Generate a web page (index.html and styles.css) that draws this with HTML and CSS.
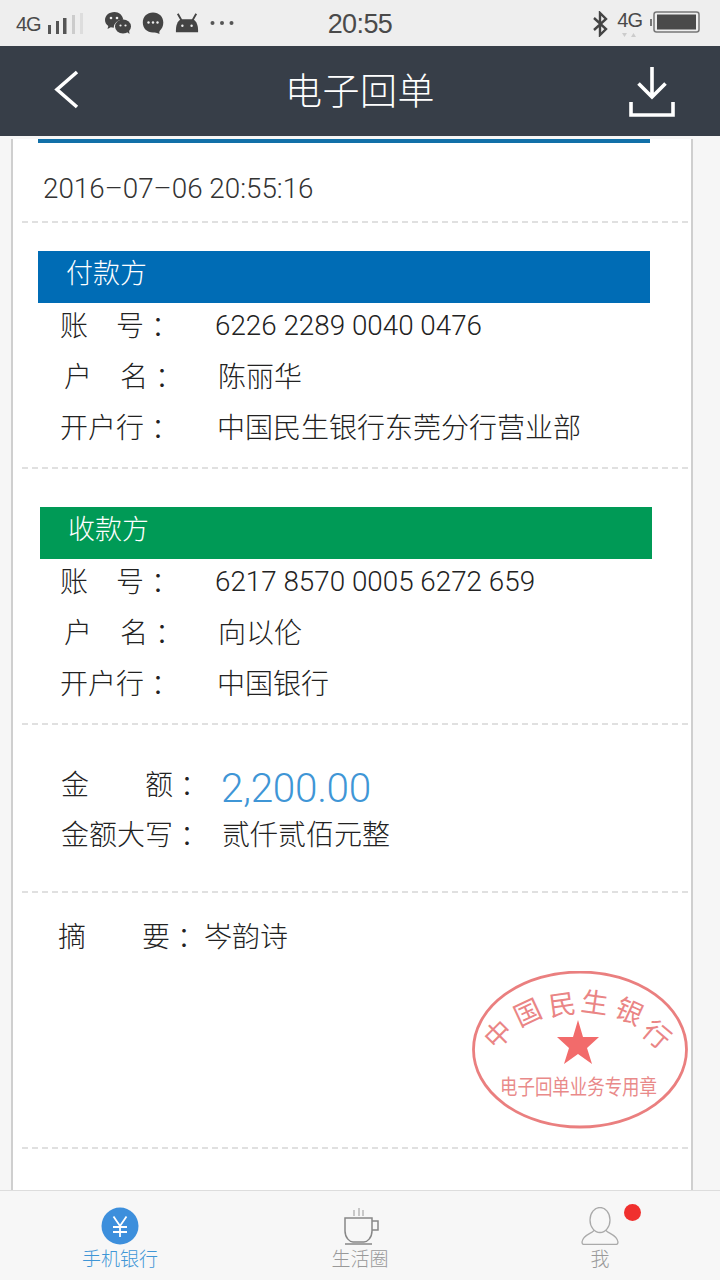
FILE: index.html
```html
<!DOCTYPE html>
<html lang="zh">
<head>
<meta charset="utf-8">
<title>电子回单</title>
<link rel="stylesheet" href="styles.css">
</head>
<body>
<div class="phone">
  <div class="status">
    <div class="status-left">
      <span class="net">4G</span>
      <svg class="signal" width="38" height="24" viewBox="0 0 38 24"><rect x="1" y="13" width="3" height="9" fill="#555"/><rect x="9" y="9" width="3" height="13" fill="#555"/><rect x="16" y="6" width="3.500" height="16" fill="#555"/><rect x="25" y="3" width="3" height="19" fill="#ccc"/><rect x="33" y="1" width="3" height="21" fill="#ddd"/></svg>
      <svg class="wechat" width="28" height="24" viewBox="0 0 28 24"><path d="M10.500 1C5 1 1 4.600 1 9c0 2.500 1.300 4.500 3.300 6l-.8 3 3.300-1.800c1 .3 2 .5 3 .5 0-4.700 4-8 9.500-8C18.500 4 15 1 10.500 1z" fill="#444"/><ellipse cx="19" cy="15.500" rx="8" ry="7" fill="#444"/><path d="M23 21l2.500 2-.5-4z" fill="#444"/><circle cx="7" cy="7" r="1.300" fill="#eee"/><circle cx="13" cy="7" r="1.300" fill="#eee"/><circle cx="16.500" cy="14.500" r="1.100" fill="#eee"/><circle cx="21.500" cy="14.500" r="1.100" fill="#eee"/></svg>
      <svg class="bubble" width="22" height="24" viewBox="0 0 22 24"><path d="M11 1.500C5 1.500.8 5.800.8 11.500S5 21.500 11 21.500c2 0 4 0 6.500 1.500-.3-1.500-.3-2.500.3-3.300 2.200-2 3.500-4.700 3.500-8.200C21.300 5.800 17 1.500 11 1.500z" fill="#444"/><circle cx="6.500" cy="11.500" r="1.200" fill="#eee"/><circle cx="11" cy="11.500" r="1.200" fill="#eee"/><circle cx="15.500" cy="11.500" r="1.200" fill="#eee"/></svg>
      <svg class="droid" width="24" height="24" viewBox="0 0 26 24"><path d="M3 2l4 7M23 2l-4 7" stroke="#444" stroke-width="2"/><path d="M1 20c0-7 3-12 7-12h10c4 0 7 5 7 12v2H1z" fill="#444"/><circle cx="8" cy="15" r="1.300" fill="#eee"/><circle cx="18" cy="15" r="1.300" fill="#eee"/></svg>
      <svg class="dots" width="24" height="6" viewBox="0 0 24 6"><circle cx="2.500" cy="3" r="2" fill="#555"/><circle cx="12" cy="3" r="2" fill="#555"/><circle cx="21.500" cy="3" r="2" fill="#555"/></svg>
    </div>
    <div class="clock">20:55</div>
    <div class="status-right">
      <svg class="bt" width="16" height="26" viewBox="0 0 16 26"><path d="M2 7l12 11-6 6V2l6 6L2 19" fill="none" stroke="#444" stroke-width="2.400"/></svg>
      <span class="net-r">4G<svg class="updown" width="16" height="6" viewBox="0 0 16 6"><path d="M1 1h5L3.500 5zM10 5h5l-2.500-4z" fill="#ccc"/></svg></span>
      <svg class="batt" width="50" height="22" viewBox="0 0 50 22"><rect x="0" y="8" width="2" height="7" fill="#777"/><rect x="4" y="1" width="45" height="20" rx="2.500" fill="none" stroke="#777" stroke-width="1.500"/><rect x="7" y="3.500" width="39" height="15" fill="#4a4a4a"/></svg>
    </div>
  </div>

  <header class="topbar">
    <svg class="back" width="30" height="40" viewBox="0 0 30 40"><path d="M25 3L5 20.500 25 38" fill="none" stroke="#fff" stroke-width="3.600"/></svg>
    <h1 class="title">电子回单</h1>
    <svg class="download" width="48" height="52" viewBox="0 0 48 52"><path d="M24 1v29M10.500 17.500L24 31l13.500-13.500M3 36v13h42V36" fill="none" stroke="#fff" stroke-width="3.600"/></svg>
  </header>

  <main class="viewport">
    <div class="card">
      <div class="rule"></div>
      <div class="date">2016–07–06 20:55:16</div>
      <div class="dash dash-date"></div>

      <div class="band band-blue">付款方</div>
      <div class="row row-first"><span class="label">账　号<span class="colon">：</span></span><span class="num">6226 2289 0040 0476</span></div>
      <div class="row"><span class="label lab-hu">户　名<span class="colon">：</span></span><span class="val">陈丽华</span></div>
      <div class="row"><span class="label">开户行<span class="colon">：</span></span><span class="val">中国民生银行东莞分行营业部</span></div>
      <div class="dash dash-pay"></div>

      <div class="band band-green">收款方</div>
      <div class="row row-first"><span class="label">账　号<span class="colon">：</span></span><span class="num">6217 8570 0005 6272 659</span></div>
      <div class="row"><span class="label lab-hu">户　名<span class="colon">：</span></span><span class="val">向以伦</span></div>
      <div class="row"><span class="label">开户行<span class="colon">：</span></span><span class="val">中国银行</span></div>
      <div class="dash dash-rec"></div>

      <div class="amount-row"><span class="amt-label amt-raised">金　　额<span class="colon">：</span></span><span class="amount">2,200.00</span></div>
      <div class="caps-row"><span class="amt-label">金额大写<span class="colon">：</span></span><span class="caps">贰仟贰佰元整</span></div>
      <div class="dash dash-amt"></div>

      <div class="memo-row"><span class="memo-label">摘　　要<span class="colon">：</span></span><span class="memo">岑韵诗</span></div>
      <div class="dash dash-memo"></div>

      <svg class="stamp" width="220" height="162" viewBox="0 0 220 162">
        <ellipse cx="109" cy="78.500" rx="106.500" ry="77.500" fill="none" stroke="#ea7f7f" stroke-width="2.800"/>
        <g class="stamp-top">
          <text transform="translate(26 62) rotate(-45)">中</text>
          <text transform="translate(56 40) rotate(-25)">国</text>
          <text transform="translate(91 32) rotate(-8)">民</text>
          <text transform="translate(124 30) rotate(8)">生</text>
          <text transform="translate(159 39) rotate(25)">银</text>
          <text transform="translate(187 62) rotate(40)">行</text>
        </g>
        <path d="M107 49l5 17h16l-12 11 5 16-14-10-14 10 5-16-12-11h16z" fill="#f26b6b"/>
        <text class="stamp-bottom" x="29" y="123" textLength="157" lengthAdjust="spacingAndGlyphs">电子回单业务专用章</text>
      </svg>
    </div>
  </main>

  <nav class="tabs">
    <div class="tab tab-active">
      <svg width="38" height="38" viewBox="0 0 38 38"><circle cx="19" cy="19" r="18.500" fill="#3d8fdc"/><path d="M12.500 9.500L19 19l6.500-9.500M19 19v11M12 20h14M12 25h14" fill="none" stroke="#fff" stroke-width="1.800"/></svg>
      <span>手机银行</span>
    </div>
    <div class="tab">
      <svg width="38" height="38" viewBox="0 0 38 38"><path d="M13 3v6M18 1v8M22 3v6" stroke="#999" stroke-width="1"/><path d="M4 11h27v13c0 7-5 11-8 11H12c-3 0-8-4-8-11zM31 14h6v9h-6M4 37h27" fill="none" stroke="#888" stroke-width="1.500"/></svg>
      <span>生活圈</span>
    </div>
    <div class="tab tab-me">
      <svg width="38" height="38" viewBox="0 0 38 38"><ellipse cx="19" cy="13" rx="10" ry="12.500" fill="none" stroke="#aaa" stroke-width="1.300"/><path d="M13 23c0 3-11 4-12 12 0 2 1 2.500 2 2.500h32c1 0 2-.5 2-2.500-1-8-12-9-12-12" fill="none" stroke="#aaa" stroke-width="1.300"/></svg>
      <span>我</span>
      <i class="badge"></i>
    </div>
  </nav>
</div>
</body>
</html>
```

FILE: styles.css
```css
* { box-sizing: border-box; }
html, body { margin: 0; padding: 0; }
body {
  width: 720px;
  height: 1280px;
  overflow: hidden;
  font-family: "Noto Sans CJK SC", "Liberation Sans", sans-serif;
  background: #f6f6f6;
}
.phone { display: flex; flex-direction: column; height: 1280px; }

.status {
  height: 46px;
  flex: none;
  background: #eeeeee;
  display: grid;
  grid-template-columns: 1fr auto 1fr;
  align-items: center;
  color: #4a4a4a;
}
.status-left { display: flex; align-items: center; padding-left: 16px; }
.net { font: 20px "Liberation Sans", sans-serif; letter-spacing: -1px; margin-top: 3px; }
.signal { margin-left: 6px; margin-top: 1px; }
.wechat { margin-left: 19px; }
.bubble { margin-left: 10px; }
.droid { margin-left: 11px; }
.dots { margin-left: 11px; }
.clock { font: 27px "Liberation Sans", sans-serif; letter-spacing: -.6px; padding-top: 3px; }
.status-right { display: flex; align-items: center; justify-content: flex-end; padding-right: 20px; }
.bt { margin-top: 1px; }
.net-r { position: relative; font: 20px "Liberation Sans", sans-serif; letter-spacing: -1px; margin-left: 9px; margin-top: -5px; }
.updown { position: absolute; left: 4px; top: 23px; }
.batt { margin-left: 8px; margin-top: -3px; }

.topbar {
  height: 90px;
  flex: none;
  background: #373e48;
  display: grid;
  grid-template-columns: 1fr auto 1fr;
  align-items: center;
  padding: 0 44px 0 52px;
}
.title {
  margin: 0 8px 4px 0;
  font-size: 37px;
  font-weight: 300;
  letter-spacing: .5px;
  color: #fff;
}
.back { margin-top: -4px; }
.download { margin-top: 2px; justify-self: end; }

.viewport { flex: 1; min-height: 0; overflow: hidden; background: #f6f6f6; }
.card {
  position: relative;
  width: 682px;
  height: 1054px;
  margin-left: 11px;
  background: #fff;
  border-left: 2px solid #cfcfcf;
  border-right: 2px solid #cfcfcf;
  color: #222;
}
.rule { height: 4px; margin: 3px 41px 0 25px; background: #1170a8; }

.date {
  margin: 27px 0 0 30px;
  height: 38px;
  font: 300 27.8px/38px Roboto, "Liberation Sans", sans-serif;
  color: #333;
}
.colon { display: inline-block; margin-left: 7px; }
.dash {
  height: 0;
  margin: 0 3px 0 9px;
  border-top: 2px dashed #e0e0e0;
}
.dash-date { margin-top: 13px; }
.dash-pay { margin-top: 16px; }
.dash-rec { margin-top: 16px; }
.dash-amt { margin-top: 38px; }
.dash-memo { margin-top: 192px; }

.band {
  height: 52px;
  padding-left: 28px;
  color: #fff;
  font-size: 27px;
  font-weight: 300;
  line-height: 42px;
}
.band-blue { margin: 28px 41px 0 25px; background: #006cb5; }
.band-green { margin: 38px 39px 0 27px; background: #009a56; }

.row {
  display: flex;
  align-items: center;
  height: 51px;
  font-size: 28px;
  font-weight: 300;
}
.row-first { margin-top: -5px; }
.label { width: 156px; margin-left: 47px; white-space: pre; }
.lab-hu { margin-left: 51px; width: 154px; }
.num { font: 300 27.8px Roboto, "Liberation Sans", sans-serif; margin-top: 3px; margin-left: -1px; color: #222; }
.val { margin-left: 1px; }
.lab-hu + .val { margin-left: 0; }

.amount-row { display: flex; align-items: center; height: 60px; margin-top: 33px; }
.caps-row { display: flex; align-items: center; height: 40px; margin-top: -5px; }
.amt-label { width: 161px; margin-left: 48px; font-size: 28px; font-weight: 300; white-space: pre; }
.amt-raised { margin-bottom: 10px; }
.amount { font: 300 40.5px Roboto, "Liberation Sans", sans-serif; color: #3f96d6; letter-spacing: -.3px; margin-left: -1px; }
.caps { font-size: 28px; font-weight: 300; }

.memo-row { display: flex; align-items: center; height: 40px; margin-top: 22px; font-size: 28px; font-weight: 300; }
.memo-label { width: 146px; margin-left: 45px; white-space: pre; }

.stamp { position: absolute; left: 458px; top: 832px; }
.stamp-top text { font-family: "Noto Sans CJK SC", sans-serif; font-size: 27px; fill: #ea8585; text-anchor: middle; dominant-baseline: central; }
.stamp-bottom { font-family: "Noto Sans CJK SC", sans-serif; font-size: 21px; fill: #e98a8a; }

.tabs {
  height: 90px;
  flex: none;
  background: #f7f7f7;
  border-top: 1px solid #dddddd;
  display: grid;
  grid-template-columns: repeat(3, 1fr);
  padding: 16px 0 0;
}
.tab {
  position: relative;
  display: flex;
  flex-direction: column;
  align-items: center;
  font-size: 19px;
  font-weight: 300;
  color: #999;
  line-height: 26px;
}
.tab svg { display: block; }
.tab-active { color: #3f96d6; }
.badge {
  position: absolute;
  left: 144px;
  top: -3px;
  width: 17px;
  height: 17px;
  border-radius: 50%;
  background: #f0302e;
}
```
